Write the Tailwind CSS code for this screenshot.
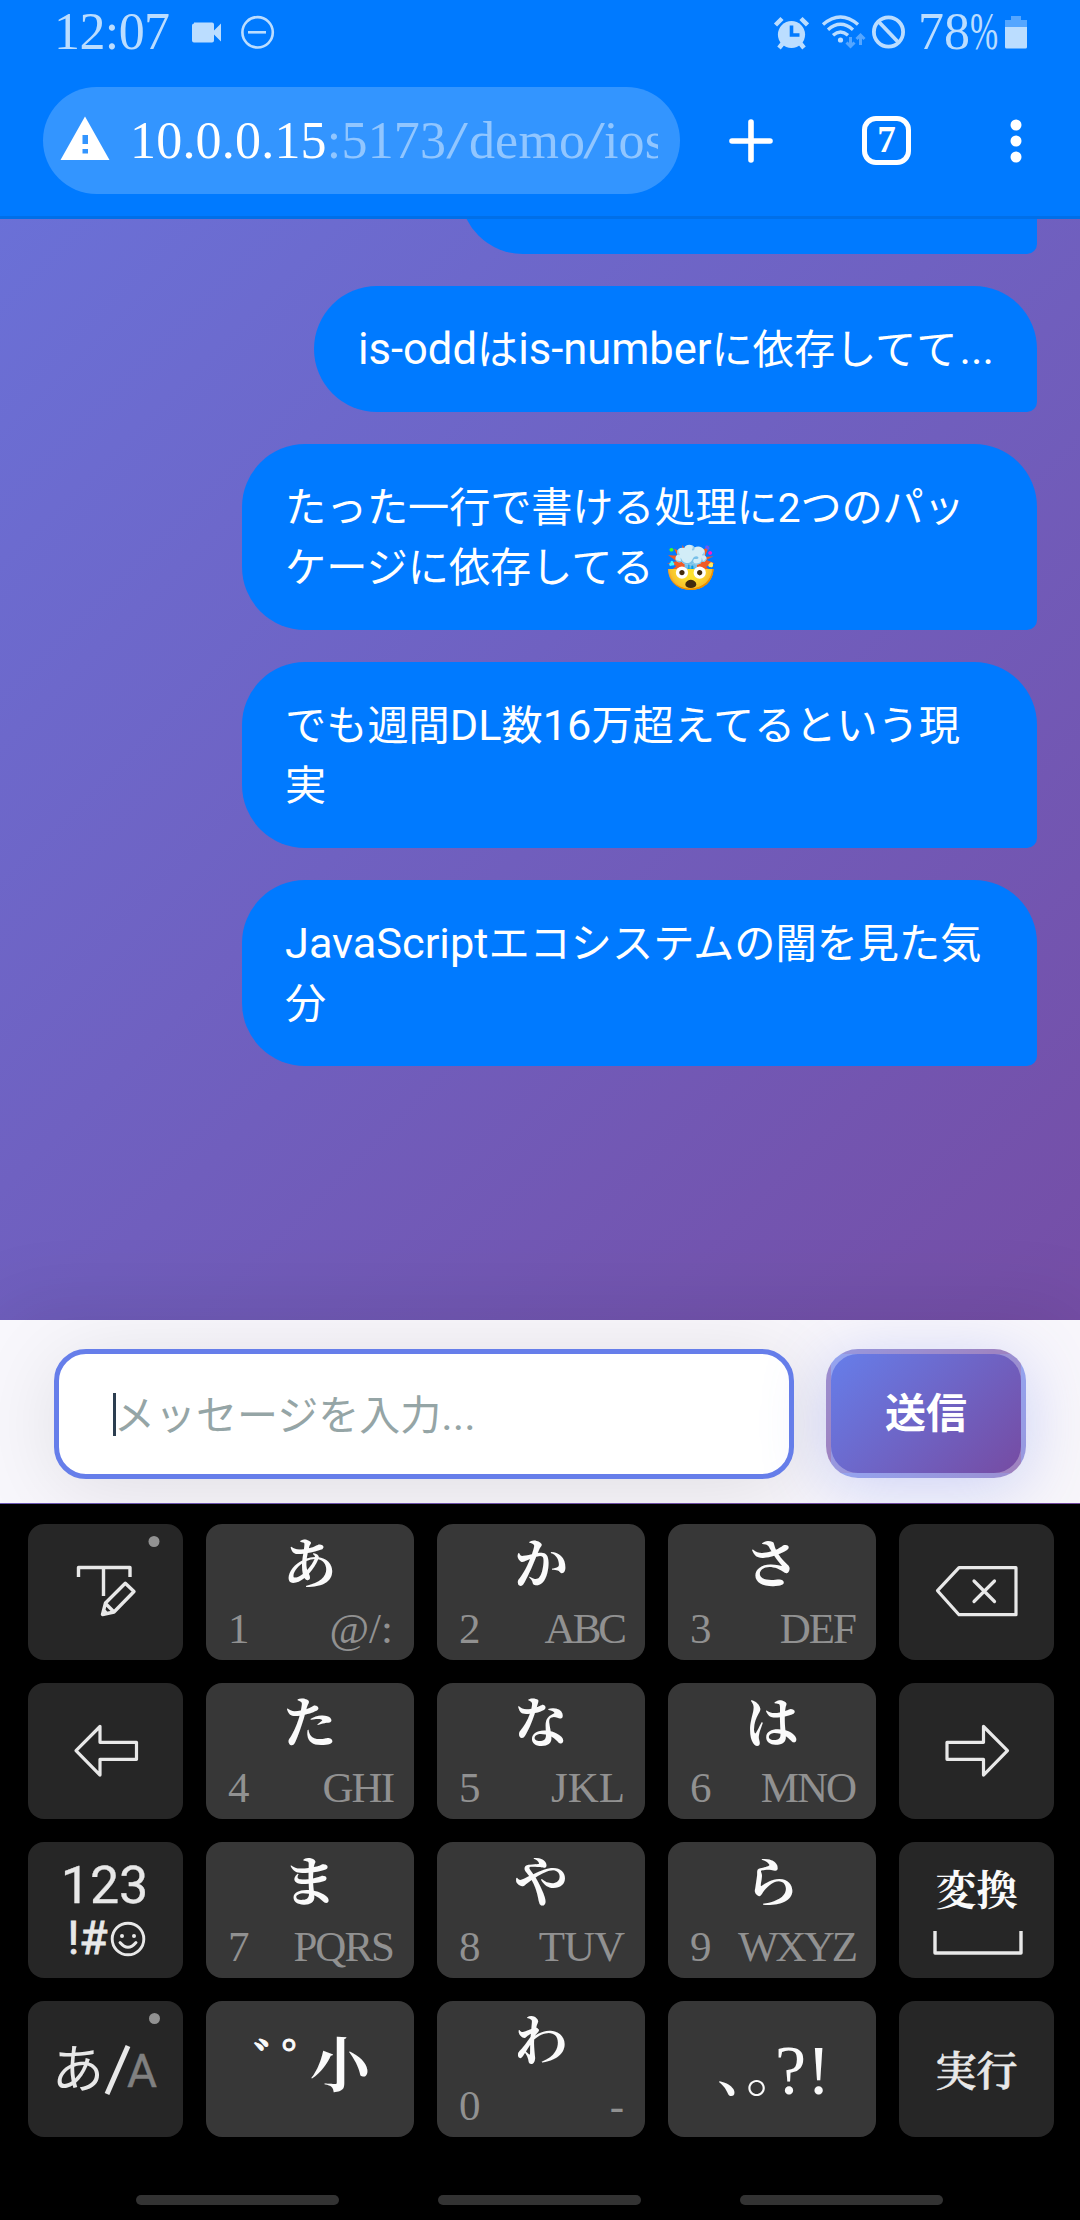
<!DOCTYPE html>
<html lang="ja">
<head>
<meta charset="utf-8">
<title>Chat</title>
<script src="https://cdn.jsdelivr.net/npm/@tailwindcss/browser@4"></script>
</head>
<body class="w-[1080px] h-[2220px] overflow-hidden bg-black flex flex-col font-['Roboto','Noto_Sans_CJK_JP',sans-serif]">

<header class="h-[219px] shrink-0 bg-[#007aff] border-b-[3px] border-[#006fe8] flex flex-col font-['Liberation_Serif',serif]">
  <!-- status bar -->
  <div class="h-[64px] flex items-center justify-between pl-[54px] pr-[53px] text-[#bbddff] text-[52px] leading-[66px]">
    <div class="flex items-center h-full">
      <span class="w-[138px] tracking-[-.6px]">12:07</span>
      <svg class="w-[30px] h-[64px]" viewBox="192 0 30 64" fill="currentColor"><path d="M194 22.5h18a2 2 0 0 1 2 2v6l7-7v18l-7-7v6a2 2 0 0 1-2 2h-18a2 2 0 0 1-2-2v-15a2 2 0 0 1 2-2z"/></svg>
      <svg class="w-[36px] h-[64px] ml-[18px]" viewBox="240 0 36 64" fill="none" stroke="currentColor" stroke-width="2.6"><circle cx="257.6" cy="32.3" r="15.2"/><path d="M248 32.3h18"/></svg>
    </div>
    <div class="flex items-center h-full">
      <svg class="w-[36px] h-[64px]" viewBox="773 0 36 64"><circle cx="791.5" cy="34.5" r="13.6" fill="currentColor"/><path d="M775.500 25l6.500-6.500M807.500 25l-6.500-6.500M779 48l4-5M804 48l-4-5" stroke="currentColor" stroke-width="4.500"/><path d="M791.500 25.500v9.500h8" fill="none" stroke="#007aff" stroke-width="3.600"/></svg>
      <svg class="w-[46px] h-[64px] ml-[12px]" viewBox="821 0 46 64" fill="none" stroke="currentColor" stroke-width="3.4"><path d="M823 24.500q17.500-15 35 0M828 29.800q12.500-11 25 0M833 35.200q7.500-6.500 15 0"/><circle cx="840.500" cy="40" r="2.600" fill="currentColor" stroke="none"/><path d="M850.500 37v9M846.500 42.500l4 4 4-4M860.500 45v-9M856.500 39l4-4 4 4" stroke="#55a6ff" stroke-width="3"/></svg>
      <svg class="w-[34px] h-[64px] ml-[4px]" viewBox="871 0 34 64" fill="none" stroke="currentColor" stroke-width="3.800"><circle cx="888.500" cy="32" r="14.600"/><path d="M878.500 21.500l20 21"/></svg>
      <span class="ml-[13px] w-[52px]">78</span><span class="w-[35px]"><span class="inline-block origin-left scale-x-[.65]">%</span></span>
      <svg class="w-[22px] h-[64px]" viewBox="1005 0 22 64"><path d="M1011 16h10v4h6v8h-22v-8h6z" fill="#55a6ff"/><path d="M1005 27h22v20a1.500 1.500 0 0 1-1.500 1.500h-19a1.500 1.500 0 0 1-1.500-1.500z" fill="currentColor"/></svg>
    </div>
  </div>
  <!-- address bar -->
  <div class="mt-[23px] h-[107px] pl-[43px] flex items-center">
    <div class="w-[637px] h-[107px] rounded-full bg-[#3395ff] flex items-center pl-[17px]">
      <svg class="w-[50px] h-[44px] mt-[-6px]" viewBox="0 0 50 44"><path d="M25 .5L49.500 44H.5z" fill="#fff"/><path d="M22.500 19h5.500v9h-5.500zM22.500 33h5.500v4.500h-5.500z" fill="#3395ff"/></svg>
      <div class="ml-[20px] w-[528px] overflow-hidden whitespace-nowrap text-[52px] leading-[64px] tracking-[.2px] text-white">10.0.0.15<span class="text-[#91c6ff]">:5173<span class="inline-block scale-x-[1.5] mx-[4px]">/</span>demo<span class="inline-block scale-x-[1.5] mx-[2px]">/</span>ios</span></div>
    </div>
    <svg class="w-[44px] h-[44px] ml-[49px]" viewBox="0 0 44 44" stroke="#fff" stroke-width="5.600" stroke-linecap="round"><path d="M22 3v38M3 22h38"/></svg>
    <div class="ml-[89px] w-[49px] h-[49px] border-[5.500px] border-white rounded-[14px] text-white font-bold text-[37px] leading-[38px] text-center">7</div>
    <svg class="w-[12px] h-[44px] ml-[99px]" viewBox="0 0 12 44" fill="#fff"><circle cx="6" cy="6" r="5.500"/><circle cx="6" cy="22" r="5.500"/><circle cx="6" cy="38" r="5.500"/></svg>
  </div>
</header>

<main class="h-[1285px] shrink-0 overflow-hidden flex flex-col justify-end bg-[linear-gradient(135deg,#667eea,#764ba2)] bg-[length:1080px_2157px] bg-bottom">
  <div class="flex-1 min-h-0 flex flex-col justify-end items-end gap-[32px] pr-[43px] pb-[254px] text-white text-[41.200px] leading-[60px]">
    <div class="shrink-0 w-[577px] h-[126px] rounded-[63px] rounded-br-[10px] bg-[#007aff]"></div>
    <div class="shrink-0 w-[723px] whitespace-nowrap rounded-[63px] rounded-br-[10px] bg-[#007aff] pl-[44px] pt-[34px] pb-[32px]"><span class="text-[43.500px]">is-odd</span>は<span class="text-[43.500px]">is-number</span>に依存してて<span class="text-[43.500px] ml-[2px]">...</span></div>
    <div class="shrink-0 w-[795px] whitespace-nowrap rounded-[63px] rounded-br-[10px] bg-[#007aff] pl-[43px] pt-[34px] pb-[32px]"><span class="tracking-[-.15px]">たった一行で書ける処理に2つのパッ</span><br>ケージに依存してる <span class="inline-block h-[60px] text-[43px] leading-[60px] align-top">🤯</span></div>
    <div class="shrink-0 w-[795px] whitespace-nowrap rounded-[63px] rounded-br-[10px] bg-[#007aff] pl-[43px] pt-[34px] pb-[32px]">でも週間<span class="text-[43.300px]">DL</span>数<span class="text-[43.300px]">16</span>万超えてるという現<br>実</div>
    <div class="shrink-0 w-[795px] whitespace-nowrap rounded-[63px] rounded-br-[10px] bg-[#007aff] pl-[43px] pt-[34px] pb-[32px]"><span class="text-[43.300px]">JavaScript</span>エコシステムの闇を見た気<br>分</div>
  </div>
  <div class="h-[183px] mb-px shrink-0 overflow-hidden bg-white/95 flex pt-[29px] pl-[54px] gap-[32px] shadow-[0_-8px_84px_rgba(0,0,0,0.1)]">
    <div class="w-[740px] h-[130px] rounded-[32px] border-[5px] border-[#667eea] bg-white shadow-[0_10px_84px_rgba(0,0,0,0.1)] flex items-center pl-[54px] text-[41px] text-[#95a5a6]">
      <span class="w-[3px] h-[43px] bg-[#2c3e50]"></span><span class="mt-[3px] ml-[-2px]">メッセージを入力<span class="text-[43.500px]">...</span></span>
    </div>
    <div class="w-[200px] h-[129px] rounded-[32px] border-[5px] border-white/30 bg-[linear-gradient(135deg,#667eea,#764ba2)] shadow-[0_10px_64px_rgba(102,126,234,0.3)] flex items-center justify-center text-white font-bold text-[41px] pt-[3px]">送信</div>
  </div>
</main>

<section class="flex-1 flex flex-col bg-black">
  <div class="mt-[20px] ml-[28px] grid grid-cols-[155px_208px_208px_208px_155px] auto-rows-[136px] gap-[23px] font-['Liberation_Serif','Noto_Serif_CJK_JP','Noto_Sans_CJK_JP',serif] text-[#fafafa]">
    <!-- row 1 -->
    <div class="rounded-[16px] bg-[#262626]"><svg class="w-[155px] h-[136px]" viewBox="0 0 155 136" fill="none" stroke="#e8e8e8" stroke-width="3.400" stroke-linejoin="round"><circle cx="126" cy="17.500" r="5.500" fill="#919191" stroke="none"/><path d="M50.500 53v-9.500h51.500v9.500M75.500 43.500v28.500"/><path d="M74.500 90.500l3-11.500 19.800-19.700 8.700 8.200-20 20.500zM78 80l8 8M75 85l4 5"/></svg></div>
    <div class="rounded-[16px] bg-[#373737] flex flex-col items-center"><span class="h-[79px] leading-[84px] text-[54px] font-bold">あ</span><span class="w-full flex justify-between pl-[22px] pr-[21px] text-[43px] leading-[52px] text-[#919191]"><span>1</span><span>@/:</span></span></div>
    <div class="rounded-[16px] bg-[#373737] flex flex-col items-center"><span class="h-[79px] leading-[84px] text-[54px] font-bold">か</span><span class="w-full flex justify-between pl-[22px] pr-[21px] text-[43px] leading-[52px] text-[#919191]"><span>2</span><span class="tracking-[-3px]">ABC</span></span></div>
    <div class="rounded-[16px] bg-[#373737] flex flex-col items-center"><span class="h-[79px] leading-[84px] text-[54px] font-bold">さ</span><span class="w-full flex justify-between pl-[22px] pr-[21px] text-[43px] leading-[52px] text-[#919191]"><span>3</span><span class="tracking-[-2px]">DEF</span></span></div>
    <div class="rounded-[16px] bg-[#262626]"><svg class="w-[155px] h-[136px]" viewBox="0 0 155 136" fill="none" stroke="#e8e8e8" stroke-width="3.200" stroke-linejoin="round" stroke-linecap="round"><path d="M38.500 66.700L60 43.700h57v47H60zM75 57l20.500 20.500M95.500 57L75 77.500"/></svg></div>
    <!-- row 2 -->
    <div class="rounded-[16px] bg-[#262626]"><svg class="w-[155px] h-[136px]" viewBox="0 0 155 136" fill="none" stroke="#e8e8e8" stroke-width="3.200" stroke-linejoin="round"><path d="M48 67.700l24-24.200v15.800h36.500v17H72v15.800z"/></svg></div>
    <div class="rounded-[16px] bg-[#373737] flex flex-col items-center"><span class="h-[79px] leading-[84px] text-[54px] font-bold">た</span><span class="w-full flex justify-between pl-[22px] pr-[21px] text-[43px] leading-[52px] text-[#919191]"><span>4</span><span class="tracking-[-2px]">GHI</span></span></div>
    <div class="rounded-[16px] bg-[#373737] flex flex-col items-center"><span class="h-[79px] leading-[84px] text-[54px] font-bold">な</span><span class="w-full flex justify-between pl-[22px] pr-[20px] text-[43px] leading-[52px] text-[#919191]"><span>5</span><span>JKL</span></span></div>
    <div class="rounded-[16px] bg-[#373737] flex flex-col items-center"><span class="h-[79px] leading-[84px] text-[54px] font-bold">は</span><span class="w-full flex justify-between pl-[22px] pr-[21px] text-[43px] leading-[52px] text-[#919191]"><span>6</span><span class="tracking-[-2px]">MNO</span></span></div>
    <div class="rounded-[16px] bg-[#262626]"><svg class="w-[155px] h-[136px]" viewBox="0 0 155 136" fill="none" stroke="#e8e8e8" stroke-width="3.200" stroke-linejoin="round"><path d="M108.500 67.700l-24-24.200v15.800H48v17h36.500v15.800z"/></svg></div>
    <!-- row 3 -->
    <div class="rounded-[16px] bg-[#262626] font-['Roboto',sans-serif] text-[#e8e8e8] flex flex-col items-center">
      <span class="mt-[15px] h-[55px] leading-[58px] text-[52px] mr-[2px] [-webkit-text-stroke:.3px_#e8e8e8]">123</span>
      <span class="h-[50px] flex items-center text-[46px] leading-[50px] ml-[2px]"><span class="mt-[2px] [-webkit-text-stroke:.8px_#e8e8e8]">!#</span><svg class="w-[36px] h-[36px] mt-[3px] ml-[2px]" viewBox="0 0 36 36" fill="none" stroke="currentColor" stroke-width="2.900" stroke-linecap="round"><circle cx="18" cy="18" r="15.800"/><path d="M10 21.500q8 9.500 16 0"/><circle cx="12" cy="15" r="2" fill="currentColor" stroke="none"/><circle cx="24" cy="15" r="2" fill="currentColor" stroke="none"/></svg></span>
    </div>
    <div class="rounded-[16px] bg-[#373737] flex flex-col items-center"><span class="h-[79px] leading-[84px] text-[54px] font-bold">ま</span><span class="w-full flex justify-between pl-[22px] pr-[21px] text-[43px] leading-[52px] text-[#919191]"><span>7</span><span class="tracking-[-2px]">PQRS</span></span></div>
    <div class="rounded-[16px] bg-[#373737] flex flex-col items-center"><span class="h-[79px] leading-[84px] text-[54px] font-bold">や</span><span class="w-full flex justify-between pl-[22px] pr-[21px] text-[43px] leading-[52px] text-[#919191]"><span>8</span><span class="tracking-[-1px]">TUV</span></span></div>
    <div class="rounded-[16px] bg-[#373737] flex flex-col items-center"><span class="h-[79px] leading-[84px] text-[54px] font-bold">ら</span><span class="w-full flex justify-between pl-[22px] pr-[21px] text-[43px] leading-[52px] text-[#919191]"><span>9</span><span class="tracking-[-3px]">WXYZ</span></span></div>
    <div class="rounded-[16px] bg-[#262626] flex flex-col items-center"><span class="mt-[19px] h-[60px] leading-[60px] text-[41px] font-bold">変換</span><svg class="w-[90px] h-[26px] mt-[9px] ml-[2px]" viewBox="0 0 90 26" fill="none" stroke="#e8e8e8" stroke-width="3.400" stroke-linejoin="round"><path d="M2 1v22h86V1"/></svg></div>
    <!-- row 4 -->
    <div class="relative rounded-[16px] bg-[#262626] flex items-center font-['Roboto','Noto_Sans_CJK_JP',sans-serif] text-[#e8e8e8] pl-[24px] whitespace-nowrap"><span class="w-[52px] text-[52px] mt-[3px]">あ</span><svg class="w-[27px] h-[50px] mt-[1px]" viewBox="0 0 27 50" stroke="#e8e8e8" stroke-width="5"><path d="M3 49L24 1"/></svg><span class="text-[46px] mt-[4px] ml-[-4px] text-[#808080] [-webkit-text-stroke:.5px_#808080]">A</span><span class="absolute left-[121px] top-[12px] size-[11px] rounded-full bg-[#919191]"></span></div>
    <div class="relative rounded-[16px] bg-[#373737] flex items-center pl-[104px]"><span class="text-[60px] mt-[-4px] leading-[60px] font-bold">小</span><span class="absolute left-[47px] top-[33px] text-[48px] leading-[60px] font-bold tracking-[-19px] [-webkit-text-stroke:1px_#fafafa]">゛゜</span></div>
    <div class="rounded-[16px] bg-[#373737] flex flex-col items-center"><span class="h-[79px] leading-[84px] text-[54px] font-bold">わ</span><span class="w-full flex justify-between pl-[22px] pr-[21px] text-[43px] leading-[52px] text-[#919191]"><span>0</span><span>-</span></span></div>
    <div class="rounded-[16px] bg-[#373737] flex items-center pl-[49px] text-[58px] whitespace-nowrap"><span class="pt-[4px] font-semibold [font-feature-settings:'halt']">、。</span><span class="pt-[3px] text-[70px] leading-[66px] tracking-[1px]">?!</span></div>
    <div class="rounded-[16px] bg-[#262626] flex items-center justify-center text-[41px] font-semibold pt-[8px] text-[#e8e8e8] [-webkit-text-stroke:.6px_#e8e8e8]">実行</div>
  </div>
  <div class="mt-[58px] ml-[136px] flex gap-[99px]">
    <span class="w-[203px] h-[10px] rounded-full bg-[#333]"></span>
    <span class="w-[203px] h-[10px] rounded-full bg-[#333]"></span>
    <span class="w-[203px] h-[10px] rounded-full bg-[#333]"></span>
  </div>
</section>
</body>
</html>
